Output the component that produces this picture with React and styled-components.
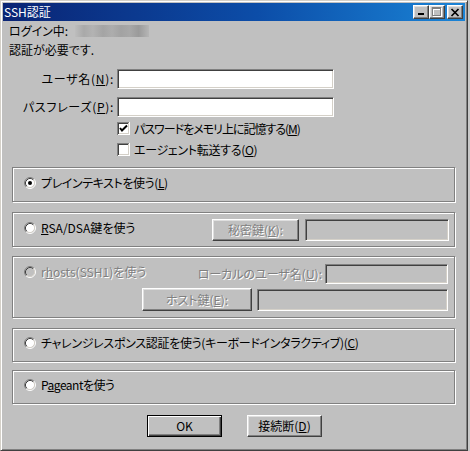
import React from 'react';
import styled, { createGlobalStyle, css } from 'styled-components';

const FONT = `"Noto Sans CJK JP", "Noto Sans", sans-serif`;

const Global = createGlobalStyle`
  html, body { margin: 0; padding: 0; background: #c8c8c8; overflow: hidden; }
  body { font-family: ${FONT}; font-size: 12px; color: #000; }
  #root { width: 470px; height: 451px; }
`;

const Window = styled.div`
  box-sizing: border-box;
  width: 468px;
  height: 451px;
  background: #c0c0c0;
  border: 1px solid;
  border-color: #d4d0c8 #404040 #404040 #d4d0c8;
  box-shadow: inset 1px 1px 0 #fff, inset -1px -1px 0 #808080;
  padding: 2px;
  display: flex;
  flex-direction: column;
  font-feature-settings: "palt";
`;

const TitleBar = styled.div`
  height: 18px;
  flex: none;
  display: flex;
  align-items: center;
  padding: 0 2px 0 1px;
  background: linear-gradient(90deg, #0a2474 0%, #0c4da8 55%, #1a84d6 100%);
`;

const TitleText = styled.span`
  color: #fff;
  font-size: 12px;
  line-height: 18px;
`;

const TitleButtons = styled.div`
  margin-left: auto;
  display: flex;
  align-items: center;
`;

const TitleButton = styled.div`
  box-sizing: border-box;
  width: 16px;
  height: 14px;
  margin-left: ${p => p.$gap || 0}px;
  background: #c0c0c0;
  border: 1px solid;
  border-color: #fff #404040 #404040 #fff;
  box-shadow: inset -1px -1px 0 #808080, inset 1px 1px 0 #dfdfdf;
  display: flex;
  align-items: center;
  justify-content: center;
  svg { display: block; }
`;

const Body = styled.div`
  display: flex;
  flex-direction: column;
  flex: 1;
`;

const Row = styled.div`
  display: flex;
  align-items: center;
  height: ${p => p.$h}px;
  margin-top: ${p => p.$mt}px;
  padding-left: ${p => p.$pl || 0}px;
  flex: none;
  white-space: nowrap;
`;

const Text = styled.span`
  line-height: 14px;
  letter-spacing: ${p => p.$ls || 0}px;
  ${p => p.$disabled && css`
    color: #808080;
    text-shadow: 1px 1px 0 #fff;
  `}
`;

const Blur = styled.div`
  width: 74px;
  height: 12px;
  margin-left: 7px;
  background: linear-gradient(90deg, #bdbdbd 0%, #a9a9a9 12%, #b3b3b3 24%, #a4a4a4 38%, #adadad 50%, #a2a2a2 62%, #a8a8a8 74%, #9a9a9a 86%, #b6b6b6 100%);
  filter: blur(0.6px);
`;

const FieldLabel = styled.span`
  width: 111px;
  margin-right: 3px;
  text-align: right;
  line-height: 14px;
  letter-spacing: 0.7px;
`;

const Field = styled.div`
  box-sizing: border-box;
  width: ${p => p.$w}px;
  height: ${p => p.$h}px;
  flex: none;
  background: ${p => (p.$disabled ? '#c0c0c0' : '#fff')};
  border: 1px solid;
  border-color: #808080 #fff #fff #808080;
  box-shadow: inset 1px 1px 0 #404040, inset -1px -1px 0 #d4d0c8;
`;

const CheckLabel = styled.label`
  display: flex;
  align-items: center;
  gap: 4px;
  svg { display: block; flex: none; }
`;

const Group = styled.div`
  box-sizing: border-box;
  flex: none;
  width: 443px;
  height: ${p => p.$h}px;
  margin: ${p => p.$mt}px 0 0 9px;
  border: 1px solid #808080;
  box-shadow: inset 1px 1px 0 #fff, 1px 1px 0 #fff;
  display: flex;
  flex-direction: ${p => (p.$column ? 'column' : 'row')};
  align-items: ${p => (p.$column ? 'stretch' : 'center')};
  padding: ${p => (p.$column ? '7px 6px 0 11px' : '0 5px 0 11px')};
  white-space: nowrap;
`;

const GroupRow = styled.div`
  display: flex;
  align-items: center;
  height: ${p => p.$h}px;
  margin-top: ${p => p.$mt || 0}px;
  justify-content: ${p => (p.$end ? 'flex-end' : 'flex-start')};
  gap: ${p => p.$gap || 0}px;
`;

const RadioOption = styled.label`
  display: flex;
  align-items: center;
  gap: 5px;
  margin-bottom: ${p => p.$lift || 0}px;
  svg { display: block; flex: none; }
`;

const Spacer = styled.div`
  flex: 1;
`;

const SideLabel = styled(Text)`
  margin-right: 3px;
`;

const Btn = styled.div`
  box-sizing: border-box;
  flex: none;
  width: ${p => p.$w}px;
  height: ${p => p.$h}px;
  margin-left: ${p => p.$ml || 0}px;
  margin-right: ${p => p.$mr || 0}px;
  background: #c0c0c0;
  display: flex;
  align-items: center;
  justify-content: center;
  line-height: 14px;
  border: 1px solid;
  ${p => p.$default
    ? css`
      border-color: #000;
      box-shadow: inset 1px 1px 0 #fff, inset -1px -1px 0 #404040, inset -2px -2px 0 #808080;
    `
    : css`
      border-color: #fff #404040 #404040 #fff;
      box-shadow: inset -1px -1px 0 #808080, inset 1px 1px 0 #dfdfdf;
    `}
  ${p => p.$disabled && css`
    color: #808080;
    text-shadow: 1px 1px 0 #fff;
  `}
`;

const ButtonRow = styled.div`
  display: flex;
  justify-content: center;
  gap: 25px;
  margin-top: 11px;
  padding-left: 1px;
`;

const Accel = styled.u`
  text-underline-offset: 1px;
`;

function Radio({ checked, disabled }) {
  return (
    <svg width="12" height="12" viewBox="0 0 12 12">
      <circle cx="6" cy="6" r="4.5" fill={disabled ? '#c0c0c0' : '#fff'} />
      <path d="M2.11 9.89 A5.5 5.5 0 0 1 9.89 2.11" fill="none" stroke="#808080" />
      <path d="M9.89 2.11 A5.5 5.5 0 0 1 2.11 9.89" fill="none" stroke="#fff" />
      <path d="M2.82 9.18 A4.5 4.5 0 0 1 9.18 2.82" fill="none" stroke="#404040" />
      <path d="M9.18 2.82 A4.5 4.5 0 0 1 2.82 9.18" fill="none" stroke="#d4d0c8" />
      {checked && <circle cx="6" cy="6" r="2" fill="#000" />}
    </svg>
  );
}

function Check({ checked }) {
  return (
    <svg width="13" height="13" viewBox="0 0 13 13" shapeRendering="crispEdges">
      <rect x="0" y="0" width="13" height="13" fill="#fff" />
      <path d="M0 12.5 V0.5 H12.5" fill="none" stroke="#808080" />
      <path d="M1 11.5 V1.5 H11.5" fill="none" stroke="#404040" />
      <path d="M0.5 12.5 H12.5 V0" fill="none" stroke="#fff" />
      <path d="M1.5 11.5 H11.5 V1" fill="none" stroke="#d4d0c8" />
      {checked && (
        <polyline points="3,6 5,8.5 10,3.5" fill="none" stroke="#000" strokeWidth="2" shapeRendering="geometricPrecision" />
      )}
    </svg>
  );
}

export default function App() {
  return (
    <>
      <Global />
      <Window>
        <TitleBar>
          <TitleText>SSH認証</TitleText>
          <TitleButtons>
            <TitleButton>
              <svg width="8" height="8" viewBox="0 0 8 8">
                <rect x="1" y="5" width="6" height="2" fill="#000" />
              </svg>
            </TitleButton>
            <TitleButton>
              <svg width="10" height="10" viewBox="0 0 10 10" shapeRendering="crispEdges">
                <path d="M1.5 1.5 H9.5 V9.5 H1.5 Z M1 2.5 H10" fill="none" stroke="#fff" />
                <path d="M0.5 0.5 H8.5 V8.5 H0.5 Z M0 1.5 H9" fill="none" stroke="#808080" />
              </svg>
            </TitleButton>
            <TitleButton $gap={2}>
              <svg width="10" height="9" viewBox="0 0 10 9">
                <path d="M1.5 1 L8.5 8 M8.5 1 L1.5 8" stroke="#000" strokeWidth="1.7" />
              </svg>
            </TitleButton>
          </TitleButtons>
        </TitleBar>
        <Body>
          <Row $h={16} $mt={2} $pl={6}>
            <Text>ログイン中:</Text>
            <Blur />
          </Row>
          <Row $h={16} $mt={3} $pl={6}>
            <Text>認証が必要です.</Text>
          </Row>
          <Row $h={20} $mt={11}>
            <FieldLabel>ユーザ名(<Accel>N</Accel>):</FieldLabel>
            <Field $w={217} $h={20} />
          </Row>
          <Row $h={20} $mt={8}>
            <FieldLabel>パスフレーズ(<Accel>P</Accel>):</FieldLabel>
            <Field $w={217} $h={20} />
          </Row>
          <Row $h={15} $mt={4} $pl={114}>
            <CheckLabel>
              <Check checked />
              <Text $ls={-1}>パスワードをメモリ上に記憶する(<Accel>M</Accel>)</Text>
            </CheckLabel>
          </Row>
          <Row $h={15} $mt={6} $pl={114}>
            <CheckLabel>
              <Check />
              <Text $ls={-0.3}>エージェント転送する(<Accel>O</Accel>)</Text>
            </CheckLabel>
          </Row>

          <Group $h={35} $mt={10}>
            <RadioOption $lift={4}>
              <Radio checked />
              <Text $ls={-0.4}>プレインテキストを使う(<Accel>L</Accel>)</Text>
            </RadioOption>
          </Group>

          <Group $h={35} $mt={10}>
            <RadioOption $lift={4}>
              <Radio />
              <Text><Accel>R</Accel>SA/DSA鍵を使う</Text>
            </RadioOption>
            <Spacer />
            <Btn $w={87} $h={22} $disabled $mr={6}>秘密鍵(<Accel>K</Accel>):</Btn>
            <Field $w={144} $h={22} $disabled />
          </Group>

          <Group $h={62} $mt={9} $column>
            <GroupRow $h={20}>
              <RadioOption $lift={4}>
                <Radio disabled />
                <Text $disabled>r<Accel>h</Accel>osts(SSH1)を使う</Text>
              </RadioOption>
              <Spacer />
              <SideLabel $disabled>ローカルのユーザ名(<Accel>U</Accel>):</SideLabel>
              <Field $w={123} $h={20} $disabled />
            </GroupRow>
            <GroupRow $h={23} $mt={4} $end $gap={5}>
              <Btn $w={110} $h={23} $disabled>ホスト鍵(<Accel>E</Accel>):</Btn>
              <Field $w={191} $h={22} $disabled />
            </GroupRow>
          </Group>

          <Group $h={34} $mt={10}>
            <RadioOption $lift={4}>
              <Radio />
              <Text $ls={-0.3}>チャレンジレスポンス認証を使う(キーボードインタラクティブ)(<Accel>C</Accel>)</Text>
            </RadioOption>
          </Group>

          <Group $h={34} $mt={8}>
            <RadioOption $lift={4}>
              <Radio />
              <Text $ls={-0.5}>P<Accel>a</Accel>geantを使う</Text>
            </RadioOption>
          </Group>

          <ButtonRow>
            <Btn $w={75} $h={22} $default>OK</Btn>
            <Btn $w={75} $h={22}>接続断(<Accel>D</Accel>)</Btn>
          </ButtonRow>
        </Body>
      </Window>
    </>
  );
}
